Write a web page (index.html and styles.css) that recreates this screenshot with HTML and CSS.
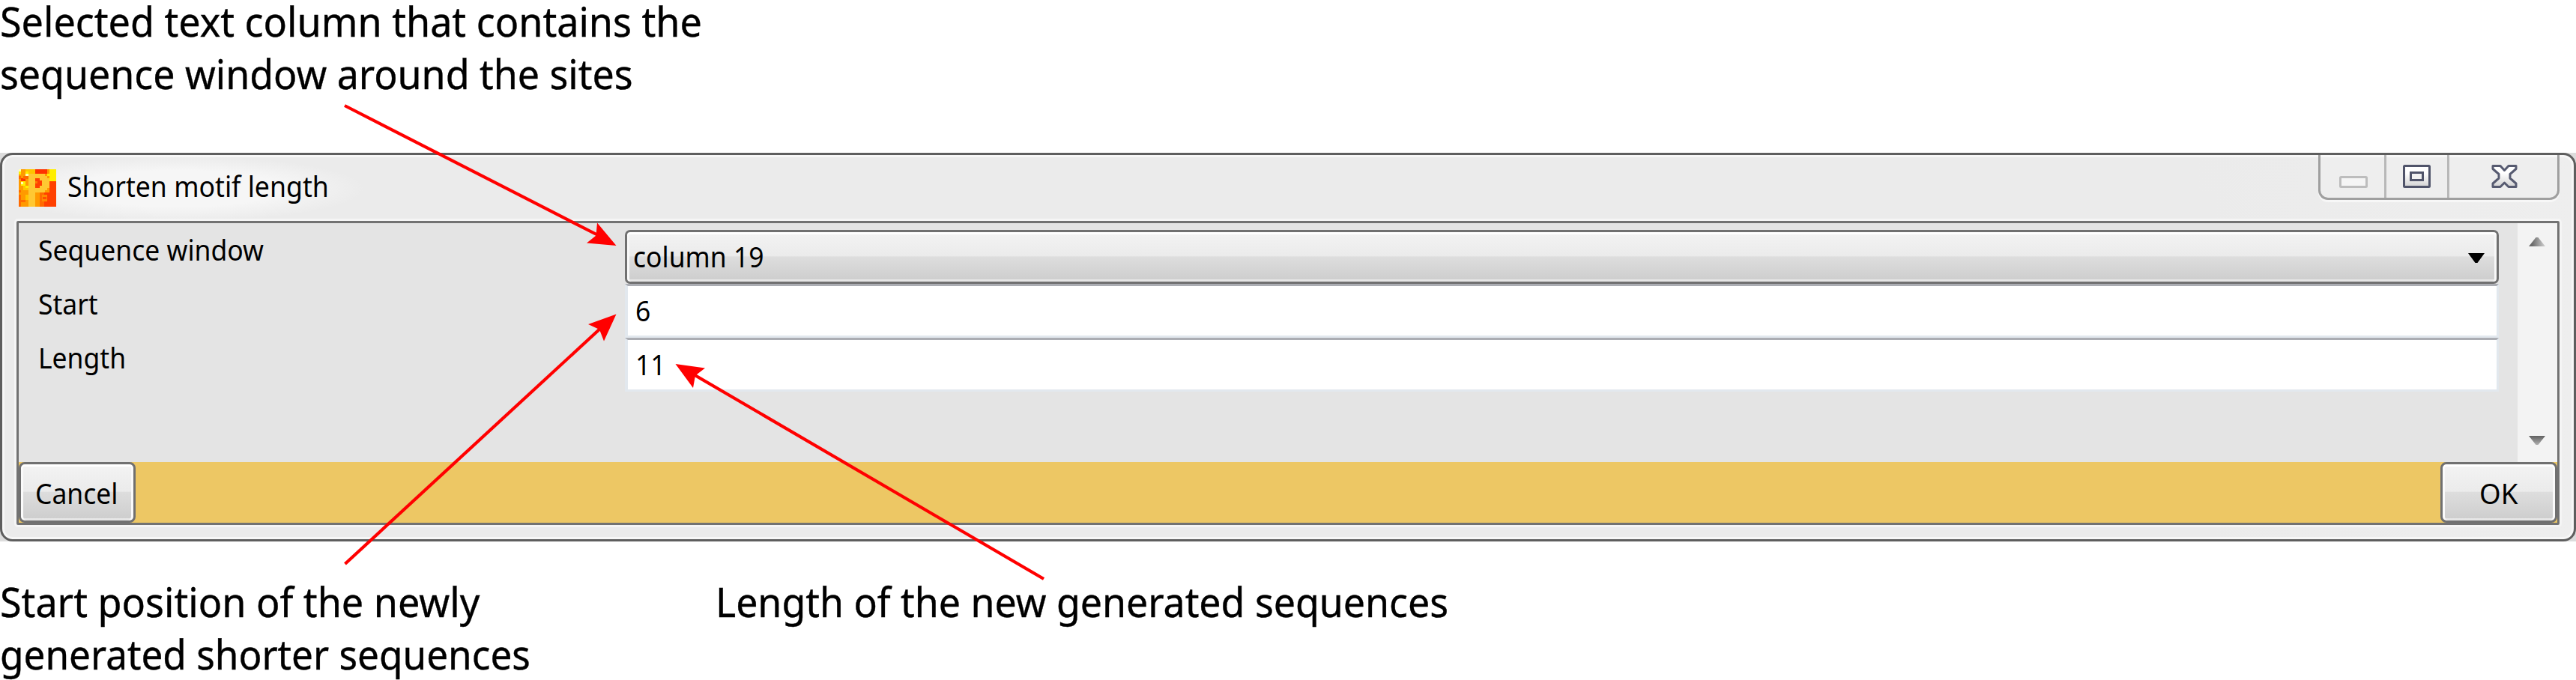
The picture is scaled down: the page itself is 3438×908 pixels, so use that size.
FILE: index.html
```
<!DOCTYPE html>
<html lang="en">
<head>
<meta charset="utf-8">
<title>Shorten motif length</title>
<link rel="stylesheet" href="styles.css">
</head>
<body>
<main class="figure">
  <div class="note note-top">
    <div class="note-line w-a">Selected text column that contains the</div>
    <div class="note-line w-d">sequence window around the sites</div>
  </div>

  <div class="frame">
    <section class="window">
      <header class="titlebar">
        <div class="caption">
          <svg class="app-icon" width="50" height="50" viewBox="0 0 150 150" shape-rendering="crispEdges">
            <path fill="#ff9a00" d="M0 0h150v150H0z"/>
            <path fill="#ff4000" d="M84 92h38V48h28v102H84z"/>
            <path fill="#ff6a00" d="M0 102h10v48H0zM10 122h18v10H10zM84 92h18v58H84z"/>
            <path fill="#ffc400" d="M28 0h38v18H28zM18 66h20v18H18zM28 102h10v20H28z"/>
            <path fill="#ff3300" d="M66 0h48v18H66zM10 36h17v12H10zM113 18h10v10h-10z"/>
            <path fill="#ff6a00" d="M18 28h20v10H18zM0 28h10v10H0zM0 84h10v10H0z"/>
            <path fill="#ffee00" d="M122 0h28v48h-28V28h-9V18h9zM0 10h10v10H0zM28 10h10v16H28zM8 48h20v18H8zM28 66h10v10H28z"/>
            <path fill="#ffffb0" d="M0 0h10v10H0zM28 18h10v10H28zM10 50h9v9h-9z"/>
            <path fill="#ff8a00" d="M93 103h20v27H93z"/>
            <path fill="#ff4f00" d="M95 112h16v8H95z"/>
            <path fill="#ffc832" fill-rule="evenodd" d="M39 18h65v9h9v9h9v38h-9v9h-9v9H66v58H39zM66 36v38h18v-9h9V45h-9v-9z"/>
            <path fill="#ff4000" d="M66 36h18v9h9v20h-9v9H66z"/>
            <path fill="#ff7a00" d="M66 48h10v10H66z"/>
          </svg>
          <span class="caption-text">Shorten motif length</span>
        </div>
        <div class="controls">
          <div class="control minimize">
            <svg width="38" height="16" viewBox="0 0 38 16"><rect x="1.5" y="1.5" width="35" height="13" rx="1" fill="#f5f5f5" stroke="#bdbdbd" stroke-width="3"/></svg>
          </div>
          <div class="control maximize">
            <svg width="37" height="31" viewBox="0 0 37 31">
              <defs><linearGradient id="glyph" x1="0" y1="0" x2="0" y2="1"><stop offset=".35" stop-color="#fff"/><stop offset="1" stop-color="#d2d2d2"/></linearGradient></defs>
              <rect x="1.5" y="1.5" width="34" height="28" rx="1" fill="url(#glyph)" stroke="#50546a" stroke-width="3"/>
              <rect x="10.5" y="10.5" width="16" height="10" fill="#f2f2f2" stroke="#50546a" stroke-width="3"/>
            </svg>
          </div>
          <div class="control close">
            <svg width="35" height="31" viewBox="0 0 35 31">
              <path d="M2 1.5H12L17.5 7.5L23 1.5H33V5.5L25 12.5V18L33 25V29.5H23L17.5 24L12 29.5H2V25L10 18V12.5L2 5.5Z" fill="url(#glyph)" stroke="#565a70" stroke-width="3" stroke-linejoin="round"/>
            </svg>
          </div>
        </div>
      </header>

      <div class="client">
        <div class="form">
          <div class="labels">
            <div class="label"><span class="ui">Sequence window</span></div>
            <div class="label"><span class="ui">Start</span></div>
            <div class="label"><span class="ui">Length</span></div>
          </div>
          <div class="fields">
            <div class="combo">
              <span class="ui">column 19</span>
              <svg class="combo-arrow" width="22" height="13" viewBox="0 0 22 13"><path d="M0 0h22L12.500 13h-3z" fill="#000"/></svg>
            </div>
            <div class="textbox"><span class="ui">6</span></div>
            <div class="textbox"><span class="ui">11</span></div>
          </div>
          <div class="scrollbar">
            <svg width="22" height="12" viewBox="0 0 22 12">
              <defs><linearGradient id="up"><stop offset=".2" stop-color="#6a6a6a"/><stop offset="1" stop-color="#d0d0d0"/></linearGradient></defs>
              <path d="M0 12h22L12.500 0h-3z" fill="url(#up)"/>
            </svg>
            <svg width="22" height="12" viewBox="0 0 22 12">
              <defs><linearGradient id="down" x1="0" y1="0" x2="0" y2="1"><stop offset="0" stop-color="#606060"/><stop offset="1" stop-color="#b0b0b0"/></linearGradient></defs>
              <path d="M0 0h22L12.500 12h-3z" fill="url(#down)"/>
            </svg>
          </div>
        </div>
        <footer class="actions">
          <div class="button"><span class="ui">Cancel</span></div>
          <div class="button ok"><span class="ui">OK</span></div>
        </footer>
      </div>
    </section>
  </div>

  <div class="notes-bottom">
    <div class="note note-start">
      <div class="note-line w-a">Start position of the newly</div>
      <div class="note-line w-b">generated shorter sequences</div>
    </div>
    <div class="note">
      <div class="note-line w-c">Length of the new generated sequences</div>
    </div>
  </div>

  <svg class="arrows" width="3438" height="908" viewBox="0 0 3438 908">
    <g stroke="#f00" stroke-width="4.200" fill="none">
      <path d="M460 141L800 315"/>
      <path d="M460.500 753L803 437"/>
      <path d="M1393 773L924 499"/>
    </g>
    <g fill="#f00">
      <path d="M822.500 328L797 297.500L795.500 314.500L783 324.500Z"/>
      <path d="M822.500 419.500L785 433L800 440L806 455.500Z"/>
      <path d="M901.500 486L941 491.500L928 501.500L925 518Z"/>
    </g>
  </svg>
</main>
</body>
</html>
```
FILE: styles.css
```
* { box-sizing: border-box; }

body {
  margin: 0;
  background: #fff;
  color: #000;
  font-family: "Noto Sans", "Open Sans", sans-serif;
}

svg { display: block; flex: none; }

.figure {
  position: relative;
  display: flex;
  flex-direction: column;
  width: 3438px;
  height: 908px;
}

.note { display: flex; flex-direction: column; gap: 14px; }

.note-line {
  width: max-content;
  font-size: 55px;
  line-height: 56px;
  white-space: nowrap;
  transform-origin: 0 50%;
  -webkit-text-stroke: .4px #000;
}
.w-a { transform: scaleX(.947); }
.w-b { transform: scaleX(.932); }
.w-c { transform: scaleX(.942); }
.w-d { transform: scaleX(.943); }

.note-top { height: 204px; flex: none; }

.notes-bottom { display: flex; padding-top: 52px; }
.note-start { width: 955px; }

/* Window chrome */
.frame { background: #dcdcdc; height: 519px; flex: none; }

.window {
  display: flex;
  flex-direction: column;
  height: 519px;
  padding: 0 19px 19px;
  border: 3px solid #5e5e5e;
  border-radius: 17px;
  background: linear-gradient(90deg, #ebebeb 85%, #eeeeee);
  box-shadow: inset 0 0 0 3px #f7f7f7;
}

.titlebar {
  display: flex;
  justify-content: space-between;
  height: 88px;
  flex: none;
}

.caption {
  display: flex;
  align-items: flex-start;
  gap: 15px;
  width: 480px;
  margin-top: 3px;
  padding: 16px 0 0 3px;
  background: radial-gradient(ellipse 250px 44px at 215px 42px, #f6f6f6 55%, rgba(235, 235, 235, 0) 100%);
}

.caption-text {
  font-size: 39px;
  line-height: 50px;
  margin-top: -3px;
  white-space: nowrap;
  transform: scaleX(.914);
  transform-origin: 0 50%;
}

.controls {
  display: flex;
  width: 322px;
  height: 60px;
  border: 3px solid #9f9f9f;
  border-top: 0;
  border-radius: 0 0 13px 13px;
  background: #eee;
  box-shadow: 0 3px 0 #f7f7f7, inset 0 3px 0 #f8f8f8;
}

.control { border-right: 3px solid #b8b8b8; padding-top: 13px; }
.minimize { width: 88px; padding: 28px 0 0 25px; }
.maximize { width: 84px; padding-left: 22px; }
.close { flex: 1; border-right: 0; padding-left: 56px; }

.client {
  display: flex;
  flex-direction: column;
  flex: 1;
  border: 3px solid #727272;
  border-radius: 2px;
  box-shadow: 0 0 0 3px #f5f5f5;
  background: #e4e4e4;
}

.form { display: flex; height: 319px; }

.ui {
  font-size: 39px;
  line-height: 50px;
  white-space: nowrap;
  transform: scaleX(.91);
  transform-origin: 0 50%;
}

.labels { width: 809px; padding-left: 26px; margin-top: -1px; }
.label { display: flex; align-items: center; height: 72px; }

.fields { width: 2501px; padding-top: 9px; }

.combo {
  display: flex;
  align-items: center;
  justify-content: space-between;
  height: 72px;
  padding: 0 16px 2px 8px;
  border: 3px solid #707070;
  border-radius: 7px;
  background: linear-gradient(#f3f3f3, #ebebeb 48%, #dddddd 50%, #cdcdcd);
  box-shadow: inset 0 3px 0 #fff, inset 3px 0 0 #f8f8f8, inset -3px 0 0 #f8f8f8, inset 0 -3px 0 #e6e6e6;
}
.combo-arrow { margin-top: 5px; }

.textbox {
  display: flex;
  align-items: center;
  height: 72px;
  padding: 0 0 2px 10px;
  border: 3px solid #e2e8ee;
  border-top-color: #abadb3;
  border-left-width: 4px;
  background: #fff;
}

.scrollbar {
  display: flex;
  flex-direction: column;
  justify-content: space-between;
  width: 53px;
  margin-left: 25px;
  padding: 19px 0 23px 15px;
  background: #f3f3f3;
}

.actions {
  display: flex;
  justify-content: space-between;
  height: 81px;
  background: #edc764;
}

.button {
  display: flex;
  align-items: center;
  width: 156px;
  padding-left: 19px;
  border: 3px solid #707070;
  border-radius: 8px;
  background: linear-gradient(#f3f3f3, #ebebeb 48%, #dddddd 50%, #cdcdcd);
  box-shadow: inset 0 3px 0 #fff, inset 3px 0 0 #fafafa, inset -3px 0 0 #fafafa, inset 0 -3px 0 #e6e6e6;
}
.ok { padding-left: 49px; }
.ok .ui { transform: scaleX(.94); }

/* Callout arrows drawn over the window */
.arrows { position: absolute; left: 0; top: 0; }
```
